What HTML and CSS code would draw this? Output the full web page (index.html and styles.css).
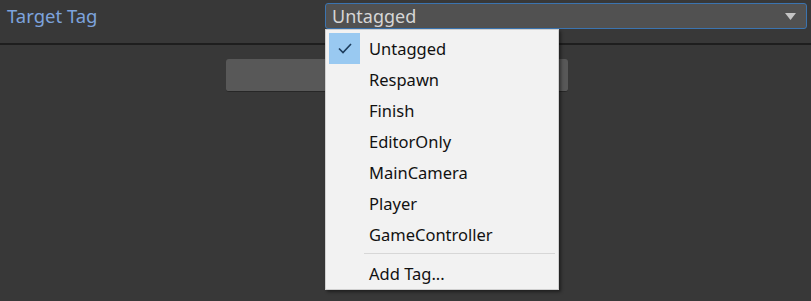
FILE: index.html
```html
<!DOCTYPE html>
<html lang="en">
<head>
<meta charset="UTF-8">
<title>Target Tag</title>
<link rel="stylesheet" href="styles.css">
</head>
<body>

<div class="field">
<label class="label">Target Tag</label>
<div class="popup">
<span class="value">Untagged</span>
<svg class="arrow" width="11" height="7" viewBox="0 0 11 7"><path d="M0 0h11L5.5 7z" fill="#c4c4c4"/></svg>
</div>
</div>

<div class="rule"></div>

<div class="content">
<div class="button"></div>
</div>

<!-- tag menu, open over the inspector -->
<ul class="menu">
<li class="item checked">
<span class="tick"><svg width="14" height="11" viewBox="0 0 14 11"><path d="M1 5.5l4 4L13 1" fill="none" stroke="#1c3c5c" stroke-width="1.6"/></svg></span>
Untagged</li>
<li class="item">Respawn</li>
<li class="item">Finish</li>
<li class="item">EditorOnly</li>
<li class="item">MainCamera</li>
<li class="item">Player</li>
<li class="item">GameController</li>
<li class="sep"></li>
<li class="item">Add Tag...</li>
</ul>

</body>
</html>
```

FILE: styles.css
```css
body {
	margin: 0;
	background-color: #383838;
	font-family: "Noto Sans", "Open Sans", sans-serif;
	position: relative;
	height: 301px;
	overflow: hidden;
}

.field {
	display: flex;
	align-items: flex-start;
	height: 43px;
	padding: 3px 4px 0 7px;
	box-sizing: border-box;
}

.label {
	width: 318px;
	color: #7da3dc;
	font-size: 18.5px;
	line-height: 25px;
}

.popup {
	flex: 1;
	display: flex;
	align-items: center;
	justify-content: space-between;
	height: 26px;
	box-sizing: border-box;
	border: 1px solid #3b74b0;
	border-radius: 3px;
	background-color: #515151;
	padding: 0 10px 0 6px;
}

.value {
	color: #d6d6d6;
	font-size: 18px;
	line-height: 24px;
}

.rule {
	height: 2px;
	background-color: #1e1e1e;
}

.content {
	padding: 14px 0 0 226px;
}

.button {
	width: 342px;
	height: 33px;
	box-sizing: border-box;
	background-color: #585858;
	border-radius: 3px;
	border-bottom: 1px solid #272727;
}

.menu {
	position: absolute;
	top: 29px;
	left: 325px;
	width: 234px;
	height: 261px;
	box-sizing: border-box;
	margin: 0;
	padding: 3px 3px 0 3px;
	list-style: none;
	background-color: #f2f2f2;
	border: 1px solid #d0d0d0;
	box-shadow: 2px 2px 3px rgba(0, 0, 0, 0.45);
}

.item {
	position: relative;
	height: 31px;
	line-height: 31px;
	padding-left: 40px;
	font-size: 16.5px;
	color: #111;
}

.tick {
	position: absolute;
	left: 0;
	top: 0;
	width: 31px;
	height: 31px;
	background-color: #99c9f1;
	display: flex;
	align-items: center;
	justify-content: center;
}

.sep {
	height: 1px;
	margin: 3px 0 4px 35px;
	background-color: #d7d7d7;
}
```
